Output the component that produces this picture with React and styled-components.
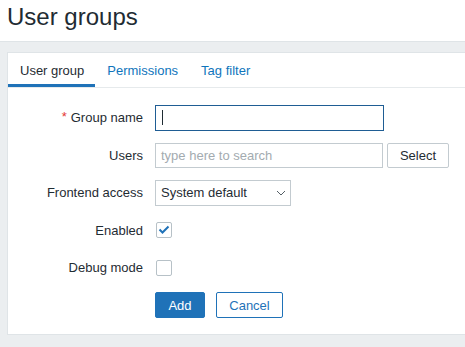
import styled, { createGlobalStyle } from "styled-components";

const GlobalStyle = createGlobalStyle`
    html, body {
        margin: 0;
        padding: 0;
        height: 100%;
        overflow: hidden;
        background-color: #ebeef0;
        font-family: "Liberation Sans", Arial, sans-serif;
        color: #1f2c33;
    }
    #root {
        height: 100%;
    }
`;

const tabs = [
    { label: "User group", active: true },
    { label: "Permissions" },
    { label: "Tag filter" },
];

export default function App() {
    return (
        <>
            <GlobalStyle />
            <Header>
                <Title>User groups</Title>
            </Header>
            <Main>
                <Card>
                    <TabList>
                        {tabs.map((t) => (
                            <Tab key={t.label} $active={t.active}>
                                {t.label}
                            </Tab>
                        ))}
                    </TabList>

                    <Form>
                        <Label>
                            <Asterisk>*</Asterisk>Group name
                        </Label>
                        <Field>
                            <TextInput $width="229px" $focused>
                                <Caret />
                            </TextInput>
                        </Field>

                        <Label>Users</Label>
                        <Field>
                            <TextInput $width="228px">
                                <Placeholder>type here to search</Placeholder>
                            </TextInput>
                            <SelectButton>Select</SelectButton>
                        </Field>

                        <Label>Frontend access</Label>
                        <Field>
                            <Dropdown>
                                System default
                                <svg width="10" height="6" viewBox="0 0 10 6">
                                    <polyline
                                        points="1,1 5,5 9,1"
                                        fill="none"
                                        stroke="#555f66"
                                        strokeWidth="1"
                                    />
                                </svg>
                            </Dropdown>
                        </Field>

                        <Label>Enabled</Label>
                        <Field>
                            <Checkbox>
                                <svg width="12" height="10" viewBox="0 0 12 10">
                                    <polyline
                                        points="1.5,4.5 4.5,7.5 10.5,1.5"
                                        fill="none"
                                        stroke="#1f72b8"
                                        strokeWidth="2"
                                    />
                                </svg>
                            </Checkbox>
                        </Field>

                        <Label>Debug mode</Label>
                        <Field>
                            <Checkbox />
                        </Field>

                        <span />
                        <Field $gap="11px">
                            <PrimaryButton>Add</PrimaryButton>
                            <OutlineButton>Cancel</OutlineButton>
                        </Field>
                    </Form>
                </Card>
            </Main>
        </>
    );
}

const Header = styled.header`
    height: 42px;
    box-sizing: border-box;
    padding: 3px 7px 0;
    background-color: #ffffff;
    border-bottom: 1px solid #dfe4e7;
`;

const Title = styled.h1`
    margin: 0;
    font-size: 24px;
    font-weight: normal;
    line-height: normal;
    color: #1f2c33;
`;

const Main = styled.main`
    padding: 10px 0 10px 7px;
`;

const Card = styled.section`
    width: calc(100% + 20px);
    background-color: #ffffff;
    border: 1px solid #dfe4e7;
    box-sizing: border-box;
`;

const TabList = styled.nav`
    display: flex;
    border-bottom: 1px solid #e6eaec;
`;

const Tab = styled.div`
    padding: 10px 11px 6px 12px;
    font-size: 13px;
    line-height: 15px;
    color: ${(p) => (p.$active ? "#1f2c33" : "#0f75bc")};
    border-bottom: 3px solid ${(p) => (p.$active ? "#1f72b8" : "transparent")};
`;

const Form = styled.div`
    display: grid;
    grid-template-columns: 135px 1fr;
    grid-auto-rows: 25px;
    column-gap: 12px;
    row-gap: 12.5px;
    padding: 17px 0 16px;
`;

const Label = styled.div`
    display: flex;
    align-items: center;
    justify-content: flex-end;
    font-size: 13px;
    color: #1f2c33;
`;

const Asterisk = styled.span`
    color: #e33734;
    margin-right: 4px;
    font-size: 13px;
    position: relative;
    top: -1px;
`;

const Field = styled.div`
    display: flex;
    align-items: center;
    gap: ${(p) => p.$gap || "4px"};
`;

const TextInput = styled.div`
    display: flex;
    align-items: center;
    box-sizing: border-box;
    width: ${(p) => p.$width};
    height: ${(p) => (p.$focused ? "26px" : "25px")};
    padding: 0 5px;
    border: 1px solid ${(p) => (p.$focused ? "#1f5d94" : "#c3cbd0")};
    background-color: #ffffff;
    font-size: 13px;
`;

const Caret = styled.span`
    display: block;
    width: 1px;
    height: 15px;
    margin-left: 1px;
    background-color: #1f2c33;
`;

const Placeholder = styled.span`
    color: #a3abb0;
`;

const SelectButton = styled.button`
    box-sizing: border-box;
    width: 62px;
    height: 25px;
    padding: 0;
    border: 1px solid #c3cbd0;
    border-radius: 2px;
    background-color: #ffffff;
    color: #1f2c33;
    font-family: inherit;
    font-size: 13px;
`;

const Dropdown = styled.div`
    display: flex;
    align-items: center;
    justify-content: space-between;
    box-sizing: border-box;
    width: 136px;
    height: 26px;
    padding: 0 4px 0 5px;
    border: 1px solid #c3cbd0;
    background-color: #ffffff;
    font-size: 13px;
    color: #1f2c33;
`;

const Checkbox = styled.div`
    display: flex;
    align-items: center;
    justify-content: center;
    box-sizing: border-box;
    width: 16px;
    height: 16px;
    margin-left: 1px;
    border: 1px solid #b7c1c7;
    border-radius: 2px;
    background-color: #ffffff;
`;

const PrimaryButton = styled.button`
    box-sizing: border-box;
    width: 50px;
    height: 26px;
    padding: 0;
    border: 1px solid #1f72b8;
    border-radius: 2px;
    background-color: #1f72b8;
    color: #ffffff;
    font-family: inherit;
    font-size: 13px;
`;

const OutlineButton = styled(PrimaryButton)`
    width: 67px;
    background-color: #ffffff;
    color: #1f72b8;
`;
